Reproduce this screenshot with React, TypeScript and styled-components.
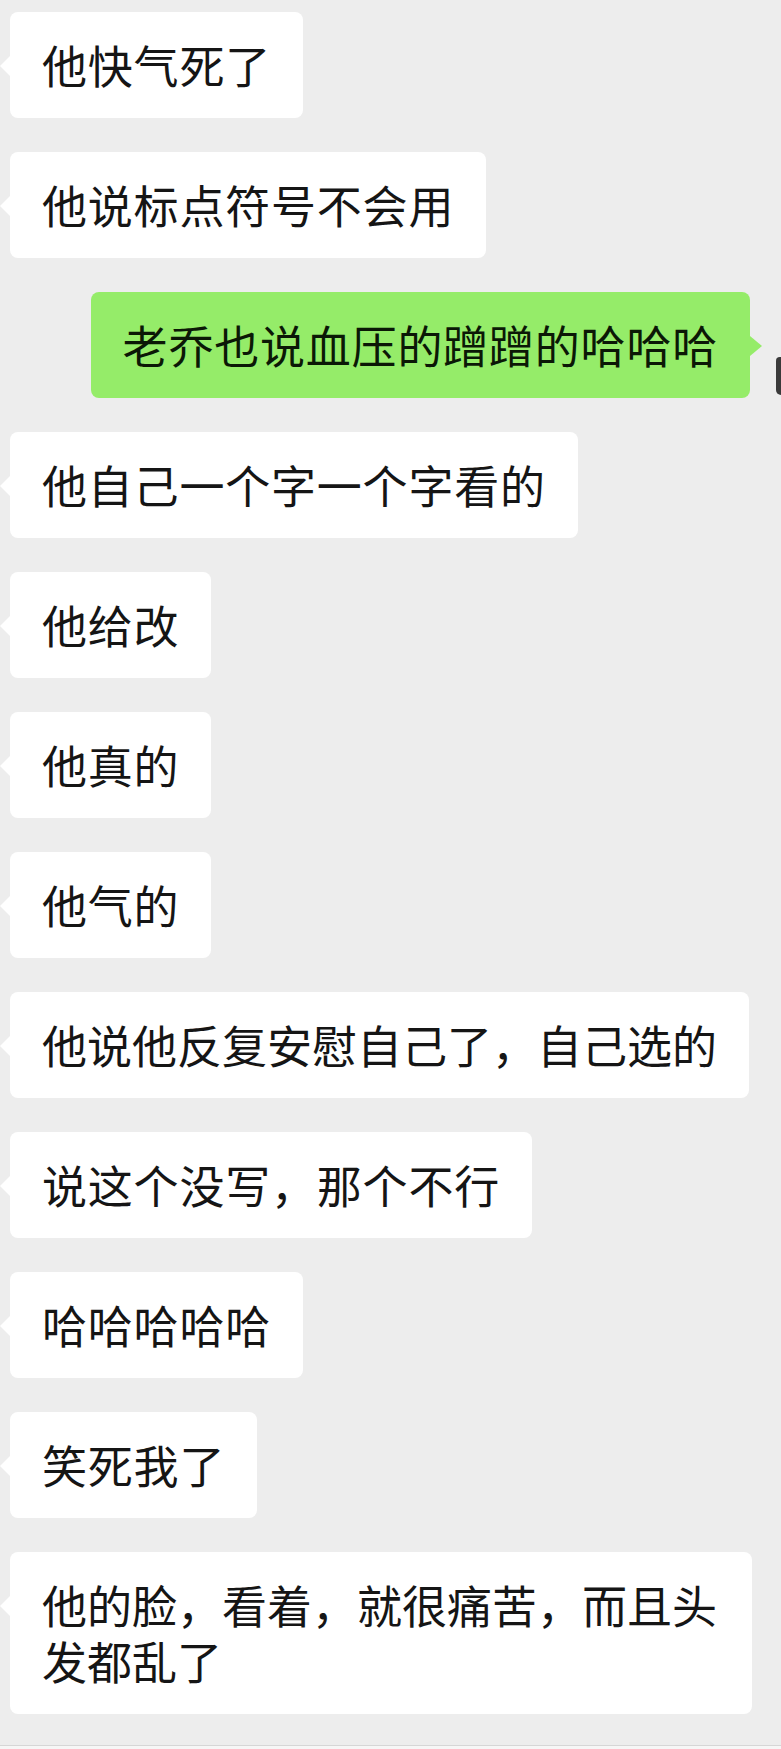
import React from 'react';
import styled, { createGlobalStyle, css } from 'styled-components';

const GlobalStyle = createGlobalStyle`
	html, body {
		margin: 0;
		padding: 0;
		background: #ededed;
		overflow-x: hidden;
	}
	body {
		font-family: "Noto Sans CJK SC", "Noto Sans", sans-serif;
	}
`;

type Side = 'left' | 'right';

const Page = styled('div')`
	width: 781px;
	min-height: 1749px;
	background: #ededed;
	display: flex;
	flex-direction: column;
`;

const List = styled('div')`
	display: flex;
	flex-direction: column;
	gap: 34px;
	padding-top: 12px;
`;

const Row = styled('div')<{ $side: Side }>`
	display: flex;
	align-items: flex-start;
	justify-content: ${props => (props.$side === 'right' ? 'flex-end' : 'flex-start')};
	padding-left: 10px;
`;

const Bubble = styled('div')<{ $side: Side; $tight?: boolean }>`
	position: relative;
	box-sizing: border-box;
	max-width: 742px;
	padding: 25px 32px;
	border-radius: 8px;
	font-size: 45px;
	line-height: 56px;
	letter-spacing: ${props => (props.$tight ? '0' : '0.8px')};
	color: #151515;
	word-break: break-all;
	background: ${props => (props.$side === 'right' ? '#95ec69' : '#ffffff')};
	${props => props.$side === 'right' && css`
		color: #0b1806;
	`}

	&::before {
		content: '';
		position: absolute;
		top: 44px;
		width: 0;
		height: 0;
		border-top: 10px solid transparent;
		border-bottom: 10px solid transparent;
		${props => (props.$side === 'right'
			? css`right: -12px; border-left: 12px solid #95ec69;`
			: css`left: -10px; border-right: 10px solid #ffffff;`)}
	}
`;

const Avatar = styled('div')`
	flex-shrink: 0;
	width: 5px;
	height: 38px;
	margin-top: 65px;
	margin-left: 26px;
	background: #3a3a3a;
	border-radius: 6px 0 0 8px;
`;

const Footer = styled('div')`
	margin-top: 31px;
	flex: 1;
	border-top: 1px solid #d6d6d6;
	background: #f6f6f6;
`;

interface Message {
	side: Side
	text: string
	tight?: boolean
}

const messages: Message[] = [
	{ side: 'left', text: '他快气死了' },
	{ side: 'left', text: '他说标点符号不会用' },
	{ side: 'right', text: '老乔也说血压的蹭蹭的哈哈哈' },
	{ side: 'left', text: '他自己一个字一个字看的' },
	{ side: 'left', text: '他给改' },
	{ side: 'left', text: '他真的' },
	{ side: 'left', text: '他气的' },
	{ side: 'left', text: '他说他反复安慰自己了，自己选的', tight: true },
	{ side: 'left', text: '说这个没写，那个不行' },
	{ side: 'left', text: '哈哈哈哈哈' },
	{ side: 'left', text: '笑死我了' },
	{ side: 'left', text: '他的脸，看着，就很痛苦，而且头发都乱了', tight: true },
];

export default function App() {
	return (
		<Page>
			<GlobalStyle />
			<List>
				{messages.map((m, i) => (
					<Row key={i} $side={m.side}>
						<Bubble $side={m.side} $tight={m.tight}>{m.text}</Bubble>
						{m.side === 'right' ? <Avatar /> : null}
					</Row>
				))}
			</List>
			<Footer />
		</Page>
	);
}
